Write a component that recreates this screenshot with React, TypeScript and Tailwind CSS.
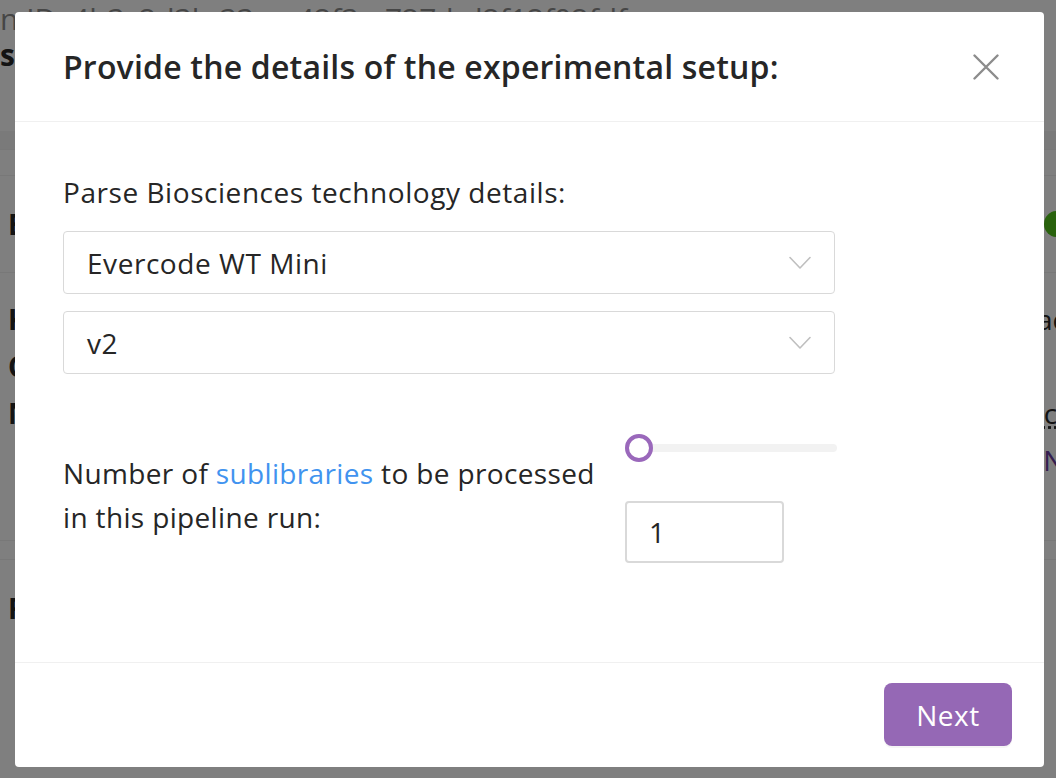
import React from "react";

const font = { fontFamily: '"Open Sans", "Noto Sans", sans-serif' };

function Chevron() {
  return (
    <svg width="22" height="14" viewBox="0 0 22 14" fill="none">
      <path d="M1 1.5 L11 12 L21 1.5" stroke="#bfbfbf" strokeWidth="1.6" strokeLinecap="round" strokeLinejoin="round" />
    </svg>
  );
}

function Background() {
  return (
    <div className="h-screen w-full overflow-hidden bg-white text-[28px] leading-[44px] text-[#262626]" style={font}>
      <div className="-mt-[3px] pl-0 text-[30px] text-[#8c8c8c] whitespace-nowrap">n ID: 4b3c2d3b-33aa-42f3-a727-bd2f12f02fdf</div>
      <div className="-mt-[8px] font-bold whitespace-nowrap text-[30px]">sc</div>
      <div className="h-[54px]" />
      <div className="h-[18px] bg-[#f5f5f5]" />
      <div className="h-[26px] border-t border-[#f0f0f0]" />
      <div className="border-t border-[#f0f0f0] h-[97px] flex items-center justify-between px-2">
        <span className="font-bold">E</span>
        <span className="w-[26px] h-[26px] rounded-full bg-[#52c41a] -mr-[22px]" />
      </div>
      <div className="border-t border-[#f0f0f0] pt-6 px-2 flex flex-col gap-[3px]">
        <div className="flex justify-between"><span className="font-bold">K</span><span className="-mr-[18px]">ac</span></div>
        <div className="flex justify-between"><span className="font-bold">C</span><span /></div>
        <div className="flex justify-between"><span className="font-bold">N</span><span className="-mr-[26px] underline decoration-dotted">.co</span></div>
        <div className="flex justify-end"><span className="text-[#6b3fa0] -mr-[32px]">Ne</span></div>
      </div>
      <div className="h-[58px]" />
      <div className="h-[19px] border-t border-[#f0f0f0]" />
      <div className="border-t border-[#f0f0f0] h-[97px] flex items-center px-2">
        <span className="font-bold">F</span>
      </div>
    </div>
  );
}

export default function App() {
  return (
    <div className="relative h-screen w-full overflow-hidden">
      <Background />
      <div className="absolute inset-0 bg-black/50" />
      <div
        className="absolute left-[15px] top-[12px] w-[1029px] rounded-[4px] bg-white text-[#262626]"
        style={font}
      >
        <div className="flex items-center justify-between border-b border-[#f0f0f0] px-12 pt-[33px] pb-8">
          <h2 className="text-[32px] leading-[44px] font-semibold tracking-[0.2px] text-[#262626]">
            Provide the details of the experimental setup:
          </h2>
          <button className="-mr-[6px] flex h-[32px] w-[32px] items-center justify-center">
            <svg width="26" height="26" viewBox="0 0 26 26" fill="none">
              <path d="M1.5 1.5 L24.5 24.5 M24.5 1.5 L1.5 24.5" stroke="#8c8c8c" strokeWidth="2.4" strokeLinecap="round" />
            </svg>
          </button>
        </div>
        <div className="h-[540px] px-12 pt-12 text-[28px] tracking-[0.55px]">
          <div className="leading-[44px]">Parse Biosciences technology details:</div>
          <div className="mt-[17px] flex h-[63px] w-[772px] items-center justify-between rounded-[4px] border border-[#d9d9d9] pl-[23px] pr-[23px]">
            <span>Evercode WT Mini</span>
            <Chevron />
          </div>
          <div className="mt-[17px] flex h-[63px] w-[772px] items-center justify-between rounded-[4px] border border-[#d9d9d9] pl-[23px] pr-[23px]">
            <span>v2</span>
            <Chevron />
          </div>
          <div className="mt-[60px] flex items-center">
            <div className="mb-[7px] w-[556px] leading-[44px] tracking-[0.35px]">
              Number of <span className="text-[#4193ef]">sublibraries</span> to be processed in this pipeline run:
            </div>
            <div className="ml-[6px] flex w-[212px] flex-col">
              <div className="relative flex h-[28px] items-center">
                <div className="h-[8px] w-full rounded-full bg-[#f2f2f2]" />
                <div className="absolute left-0 top-0 h-[28px] w-[28px] rounded-full border-[4px] border-[#9a68bb] bg-white" />
              </div>
              <div className="mt-[39px] flex h-[62px] w-[159px] items-center rounded-[4px] border-2 border-[#d9d9d9] pl-[22px]">
                1
              </div>
            </div>
          </div>
        </div>
        <div className="flex justify-end border-t border-[#f0f0f0] px-8 pt-5 pb-[21px]">
          <button className="h-[63px] w-[128px] rounded-[8px] bg-[#9568b5] text-[28px] tracking-[0.5px] text-white shadow-[0_2px_0_rgba(0,0,0,0.04)]">
            Next
          </button>
        </div>
      </div>
    </div>
  );
}
